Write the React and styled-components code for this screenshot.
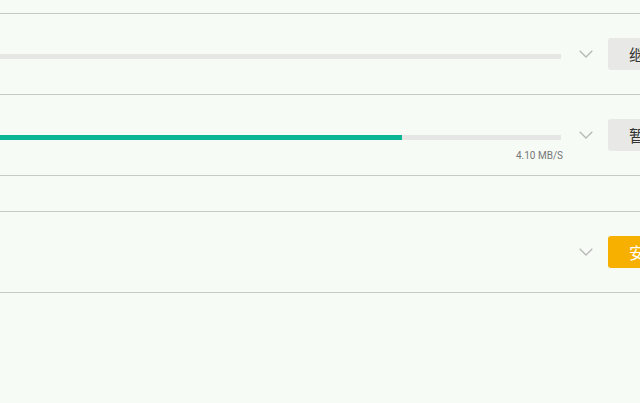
import React from 'react';
import styled, { createGlobalStyle } from 'styled-components';

const GlobalStyle = createGlobalStyle`
  html, body {
    margin: 0;
    padding: 0;
    background: #f6fbf5;
    overflow: hidden;
  }
  body {
    font-family: Roboto, "Noto Sans CJK SC", sans-serif;
  }
`;

const items = [
  { id: 'a', progress: 0, action: '继续', kind: 'plain' },
  { id: 'b', progress: 71.7, speed: '4.10 MB/S', action: '暂停', kind: 'plain' },
  { id: 'gap', spacer: true },
  { id: 'c', action: '安装', kind: 'accent', noBar: true },
];

const Chevron = () => (
  <svg width="14" height="8" viewBox="0 0 14 8" fill="none">
    <polyline points="0.7,0.7 7,7 13.3,0.7" stroke="#b8b8b8" strokeWidth="1.3" />
  </svg>
);

const App = () => {
  return (
    <>
      <GlobalStyle />
      <Page>
        <TopStrip />
        {items.map((item) =>
          item.spacer ? (
            <Spacer key={item.id} />
          ) : (
            <Row key={item.id}>
              <Info>
                {!item.noBar && (
                  <Track>
                    <Fill style={{ width: `${item.progress}%` }} />
                  </Track>
                )}
                {item.speed && <Speed>{item.speed}</Speed>}
              </Info>
              <Toggle>
                <Chevron />
              </Toggle>
              <ActionButton $kind={item.kind}>{item.action}</ActionButton>
            </Row>
          )
        )}
      </Page>
    </>
  );
};

export default App;

const Page = styled.div`
  width: 700px;
  min-height: 403px;
  background: #f6fbf5;
`;

const TopStrip = styled.div`
  height: 13px;
  border-bottom: 1px solid #c8c8c8;
`;

const Spacer = styled.div`
  height: 35px;
  border-bottom: 1px solid #c8c8c8;
`;

const Row = styled.div`
  display: flex;
  align-items: center;
  height: 80px;
  padding-right: 18px;
  border-bottom: 1px solid #c8c8c8;
`;

const Info = styled.div`
  flex: 1;
  align-self: stretch;
  display: flex;
  flex-direction: column;
  padding-top: 40px;
  box-sizing: border-box;
`;

const Track = styled.div`
  height: 5px;
  background: #e6e7e4;
`;

const Fill = styled.div`
  height: 100%;
  background: #0ab595;
`;

const Speed = styled.div`
  margin-top: 10px;
  font-family: Roboto, sans-serif;
  font-size: 10px;
  line-height: 12px;
  color: #777;
  text-align: right;
  margin-right: -2px;
`;

const Toggle = styled.div`
  width: 47px;
  display: flex;
  justify-content: center;
  padding-left: 2px;
  box-sizing: border-box;
`;

const ActionButton = styled.button`
  width: 74px;
  height: 32px;
  border: none;
  border-radius: 3px;
  padding: 0;
  font-family: "Noto Sans CJK SC", sans-serif;
  font-size: 16px;
  background: ${(p) => (p.$kind === 'accent' ? '#f7b000' : '#e8e9e6')};
  color: ${(p) => (p.$kind === 'accent' ? '#fff' : '#333')};
`;
